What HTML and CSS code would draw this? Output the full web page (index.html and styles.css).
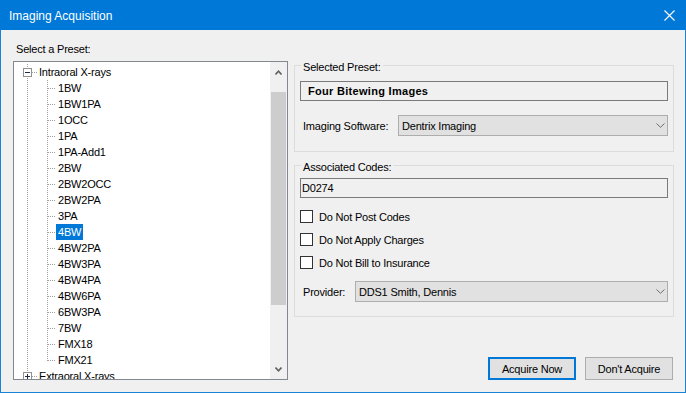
FILE: index.html
```html
<!DOCTYPE html>
<html>
<head>
<meta charset="utf-8">
<title>Imaging Acquisition</title>
<link rel="stylesheet" href="styles.css">
</head>
<body>
<div class="window">
  <div class="titlebar">
    <span class="title">Imaging Acquisition</span>
    <svg class="close" width="11" height="11" viewBox="0 0 11 11"><path d="M0.5 0.5 L10.5 10.5 M10.5 0.5 L0.5 10.5" stroke="#fff" stroke-width="1.1" fill="none"/></svg>
  </div>
  <div class="content">
    <div class="left">
      <div class="label">Select a Preset:</div>
      <div class="tree">
        <div class="tree-items">
          <div class="row"><span class="c root-t"><span class="exp minus"></span></span><span class="txt">Intraoral X-rays</span></div>
          <div class="row"><span class="c v"></span><span class="c c1 t"></span><span class="txt">1BW</span></div>
          <div class="row"><span class="c v"></span><span class="c c1 t"></span><span class="txt">1BW1PA</span></div>
          <div class="row"><span class="c v"></span><span class="c c1 t"></span><span class="txt">1OCC</span></div>
          <div class="row"><span class="c v"></span><span class="c c1 t"></span><span class="txt">1PA</span></div>
          <div class="row"><span class="c v"></span><span class="c c1 t"></span><span class="txt">1PA-Add1</span></div>
          <div class="row"><span class="c v"></span><span class="c c1 t"></span><span class="txt">2BW</span></div>
          <div class="row"><span class="c v"></span><span class="c c1 t"></span><span class="txt">2BW2OCC</span></div>
          <div class="row"><span class="c v"></span><span class="c c1 t"></span><span class="txt">2BW2PA</span></div>
          <div class="row"><span class="c v"></span><span class="c c1 t"></span><span class="txt">3PA</span></div>
          <div class="row"><span class="c v"></span><span class="c c1 t"></span><span class="txt sel">4BW</span></div>
          <div class="row"><span class="c v"></span><span class="c c1 t"></span><span class="txt">4BW2PA</span></div>
          <div class="row"><span class="c v"></span><span class="c c1 t"></span><span class="txt">4BW3PA</span></div>
          <div class="row"><span class="c v"></span><span class="c c1 t"></span><span class="txt">4BW4PA</span></div>
          <div class="row"><span class="c v"></span><span class="c c1 t"></span><span class="txt">4BW6PA</span></div>
          <div class="row"><span class="c v"></span><span class="c c1 t"></span><span class="txt">6BW3PA</span></div>
          <div class="row"><span class="c v"></span><span class="c c1 t"></span><span class="txt">7BW</span></div>
          <div class="row"><span class="c v"></span><span class="c c1 t"></span><span class="txt">FMX18</span></div>
          <div class="row"><span class="c v"></span><span class="c c1 l"></span><span class="txt">FMX21</span></div>
          <div class="row"><span class="c root-l"><span class="exp plus"></span></span><span class="txt">Extraoral X-rays</span></div>
        </div>
        <div class="scrollbar">
          <div class="sb-btn up"><svg width="7" height="5" viewBox="0 0 7 5"><polyline points="0.5,4.5 3.5,1.2 6.5,4.5" stroke="#606060" stroke-width="1.6" fill="none"/></svg></div>
          <div class="sb-track"><div class="thumb"></div></div>
          <div class="sb-btn down"><svg width="7" height="5" viewBox="0 0 7 5"><polyline points="0.5,0.5 3.5,3.8 6.5,0.5" stroke="#606060" stroke-width="1.6" fill="none"/></svg></div>
        </div>
      </div>
    </div>
    <div class="right">
      <div class="group g1">
        <span class="caption">Selected Preset:</span>
        <div class="textbox bold">Four Bitewing Images</div>
        <div class="field">
          <span class="field-label sw">Imaging Software:</span>
          <div class="combo"><span>Dentrix Imaging</span><svg width="9" height="5" viewBox="0 0 9 5"><polyline points="0.5,0.5 4.5,4.3 8.5,0.5" stroke="#6d6d6d" stroke-width="1" fill="none"/></svg></div>
        </div>
      </div>
      <div class="group g2">
        <span class="caption">Associated Codes:</span>
        <div class="textbox">D0274</div>
        <div class="checks">
          <div class="check-row"><span class="box"></span><span>Do Not Post Codes</span></div>
          <div class="check-row"><span class="box"></span><span>Do Not Apply Charges</span></div>
          <div class="check-row"><span class="box"></span><span>Do Not Bill to Insurance</span></div>
        </div>
        <div class="field prov">
          <span class="field-label pv">Provider:</span>
          <div class="combo"><span>DDS1 Smith, Dennis</span><svg width="9" height="5" viewBox="0 0 9 5"><polyline points="0.5,0.5 4.5,4.3 8.5,0.5" stroke="#6d6d6d" stroke-width="1" fill="none"/></svg></div>
        </div>
      </div>
      <div class="buttons">
        <div class="btn primary">Acquire Now</div>
        <div class="btn">Don't Acquire</div>
      </div>
    </div>
  </div>
</div>
</body>
</html>
```
FILE: styles.css
```css
html, body {
  margin: 0;
  padding: 0;
  background: #ffffff;
}
body {
  font-family: "Liberation Sans", Arial, sans-serif;
  font-size: 11px;
  letter-spacing: -0.2px;
  color: #000;
}
.window {
  width: 686px;
  height: 393px;
  box-sizing: border-box;
  border: 1px solid #1883d7;
  border-top: 0;
  background: #f0f0f0;
  display: flex;
  flex-direction: column;
}
.titlebar {
  flex: none;
  height: 30px;
  margin: 0 -1px;
  box-sizing: border-box;
  padding: 2px 11px 0 9px;
  background: #0078d7;
  color: #fff;
  font-size: 12px;
  letter-spacing: 0;
  display: flex;
  align-items: center;
  justify-content: space-between;
}
.close { display: block; margin-top: -2px; }
.content {
  flex: 1;
  display: flex;
  padding: 0 11px 12px 12px;
}
.left {
  width: 275px;
  flex: none;
  display: flex;
  flex-direction: column;
}
.label {
  margin-top: 13px;
  height: 13px;
  line-height: 13px;
  padding-left: 3px;
}
.tree {
  margin-top: 5px;
  height: 319px;
  box-sizing: border-box;
  border: 1px solid #828790;
  background: #fff;
  display: flex;
}
.tree-items {
  flex: 1;
  overflow: hidden;
  padding-top: 2px;
}
.row {
  display: flex;
  height: 16px;
  line-height: 16px;
  padding-left: 3px;
  white-space: nowrap;
}
.c {
  flex: none;
  width: 20px;
  height: 16px;
  display: flex;
  align-items: flex-start;
}
.c1 { width: 19px; }
.txt { padding: 0 2px; }
.sel { background: #0078d7; color: #fff; }

.v {
  background: repeating-linear-gradient(to bottom, #a0a0a0 0 1px, transparent 1px 2px) 10px 0 / 1px 16px no-repeat;
}
.t {
  background:
    repeating-linear-gradient(to bottom, #a0a0a0 0 1px, transparent 1px 2px) 10px 0 / 1px 16px no-repeat,
    repeating-linear-gradient(to right, #a0a0a0 0 1px, transparent 1px 2px) 11px 8px / 8px 1px no-repeat;
}
.l {
  background:
    repeating-linear-gradient(to bottom, #a0a0a0 0 1px, transparent 1px 2px) 10px 0 / 1px 9px no-repeat,
    repeating-linear-gradient(to right, #a0a0a0 0 1px, transparent 1px 2px) 11px 8px / 8px 1px no-repeat;
}
.root-t {
  background:
    repeating-linear-gradient(to bottom, #a0a0a0 0 1px, transparent 1px 2px) 10px 0 / 1px 16px no-repeat,
    repeating-linear-gradient(to right, #a0a0a0 0 1px, transparent 1px 2px) 15px 8px / 5px 1px no-repeat;
}
.root-l {
  background:
    repeating-linear-gradient(to bottom, #a0a0a0 0 1px, transparent 1px 2px) 10px 0 / 1px 9px no-repeat,
    repeating-linear-gradient(to right, #a0a0a0 0 1px, transparent 1px 2px) 15px 8px / 5px 1px no-repeat;
}
.exp {
  width: 9px;
  height: 9px;
  box-sizing: border-box;
  margin: 4px 0 0 6px;
  border: 1px solid #919191;
  background: #fff;
}
.exp.minus {
  background: linear-gradient(#1e2a4a, #1e2a4a) 1px 3px / 5px 1px no-repeat, #fff;
}
.exp.plus {
  background:
    linear-gradient(#1e2a4a, #1e2a4a) 1px 3px / 5px 1px no-repeat,
    linear-gradient(#1e2a4a, #1e2a4a) 3px 1px / 1px 5px no-repeat, #fff;
}
.scrollbar {
  flex: none;
  width: 17px;
  background: #f0f0f0;
  display: flex;
  flex-direction: column;
}
.sb-btn {
  height: 17px;
  flex: none;
  display: flex;
  justify-content: center;
}
.sb-btn.up { align-items: flex-end; padding-bottom: 4px; box-sizing: border-box; }
.sb-btn.down { align-items: flex-start; padding-top: 5px; box-sizing: border-box; }
.sb-btn svg { display: block; }
.sb-track { flex: 1; }
.thumb {
  margin: 13px 1px 0;
  height: 213px;
  background: #cdcdcd;
}

.right {
  width: 380px;
  flex: none;
  margin-left: 6px;
  display: flex;
  flex-direction: column;
}
.group {
  position: relative;
  box-sizing: border-box;
  border: 1px solid #dcdcdc;
}
.caption {
  position: absolute;
  top: -5px;
  left: 6px;
  padding: 0 2px;
  line-height: 13px;
  background: #f0f0f0;
}
.g1 {
  margin-top: 35px;
  height: 87px;
  padding: 15px 5px 0;
}
.g2 {
  margin-top: 13px;
  height: 152px;
  padding: 12px 5px 0;
}
.textbox {
  height: 20px;
  box-sizing: border-box;
  border: 1px solid #7a7a7a;
  background: #f0f0f0;
  display: flex;
  align-items: center;
  padding-left: 1px;
}
.textbox.bold {
  font-weight: bold;
  letter-spacing: 0.3px;
  padding-left: 7px;
}
.field {
  display: flex;
  align-items: center;
  margin-top: 14px;
}
.field.prov { margin-top: 7px; }
.field-label {
  flex: none;
  box-sizing: border-box;
  padding-left: 3px;
}
.field-label.sw { width: 98px; }
.field-label.pv { width: 55px; }
.combo {
  flex: 1;
  height: 21px;
  box-sizing: border-box;
  border: 1px solid #adadad;
  background: #e1e1e1;
  display: flex;
  align-items: center;
  justify-content: space-between;
  padding: 0 2px 0 3px;
}
.combo svg { display: block; }
.checks { margin-top: 7px; }
.check-row {
  height: 23px;
  display: flex;
  align-items: center;
}
.box {
  flex: none;
  width: 13px;
  height: 13px;
  box-sizing: border-box;
  border: 1px solid #333;
  background: #fff;
  margin-right: 6px;
}
.buttons {
  margin-top: auto;
  display: flex;
  justify-content: flex-end;
  gap: 9px;
  padding-right: 1px;
}
.btn {
  width: 88px;
  height: 23px;
  box-sizing: border-box;
  border: 1px solid #adadad;
  background: #e1e1e1;
  display: flex;
  align-items: center;
  justify-content: center;
}
.btn.primary { border: 2px solid #0078d7; }
```
